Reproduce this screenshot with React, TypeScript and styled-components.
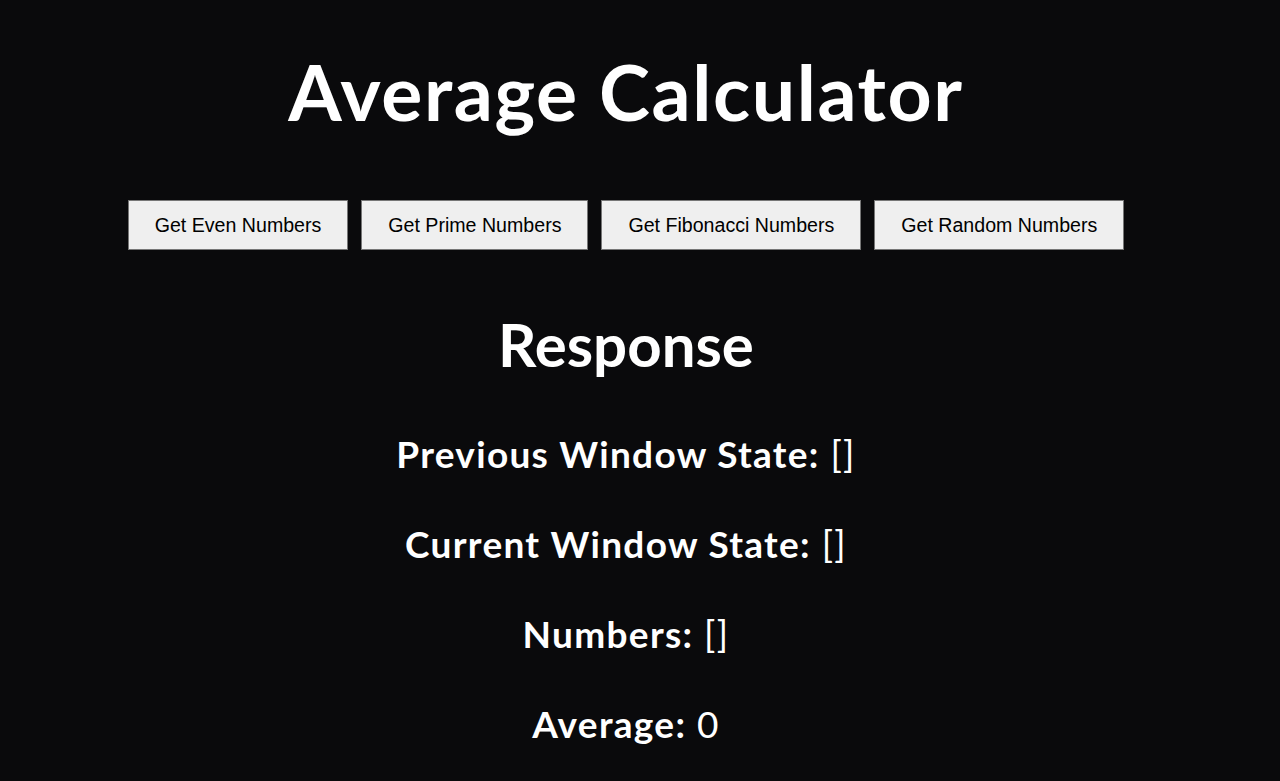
import React from "react";
import styled, { createGlobalStyle } from "styled-components";

const GlobalStyle = createGlobalStyle`
  html, body {
    margin: 0;
    padding: 0;
    background: #0a0a0c;
  }
  body {
    font-family: Lato, "Open Sans", sans-serif;
    color: #ffffff;
  }
`;

const Page = styled.main`
  box-sizing: border-box;
  width: 100%;
  min-height: 781px;
  padding: 46px 28px 0 0;
  display: flex;
  flex-direction: column;
  align-items: center;
  text-align: center;
`;

const Title = styled.h1`
  margin: 0;
  font-family: Lato, sans-serif;
  font-weight: 700;
  font-size: 77px;
  line-height: 90px;
  letter-spacing: 1.6px;
`;

const ButtonRow = styled.div`
  margin-top: 64px;
  display: flex;
  gap: 13px;
  justify-content: center;
`;

const ActionButton = styled.button`
  height: 50px;
  padding: 0 26px;
  background: #efefef;
  color: #000000;
  border: 1px solid #767676;
  border-radius: 0;
  font-family: "Liberation Sans", Arial, sans-serif;
  font-size: 19.6px;
  cursor: pointer;
`;

const SectionTitle = styled.h2`
  margin: 59px 0 0;
  font-family: Lato, sans-serif;
  font-weight: 700;
  font-size: 60px;
  line-height: 70px;
`;

const StatList = styled.div`
  margin-top: 53px;
  display: flex;
  flex-direction: column;
  align-items: center;
  gap: 46px;
`;

const StatLine = styled.p`
  margin: 0;
  font-family: Lato, sans-serif;
  font-size: 37px;
  line-height: 44px;
  font-weight: 400;
  letter-spacing: 1.3px;
`;

const Label = styled.strong`
  font-weight: 700;
`;

const stats = [
  { label: "Previous Window State:", value: "[]" },
  { label: "Current Window State:", value: "[]" },
  { label: "Numbers:", value: "[]" },
  { label: "Average:", value: "0" },
];

const buttons = [
  "Get Even Numbers",
  "Get Prime Numbers",
  "Get Fibonacci Numbers",
  "Get Random Numbers",
];

export default function App() {
  return (
    <>
      <GlobalStyle />
      <Page>
        <Title>Average Calculator</Title>
        <ButtonRow>
          {buttons.map((b) => (
            <ActionButton key={b}>{b}</ActionButton>
          ))}
        </ButtonRow>
        <SectionTitle>Response</SectionTitle>
        <StatList>
          {stats.map((s) => (
            <StatLine key={s.label}>
              <Label>{s.label}</Label> {s.value}
            </StatLine>
          ))}
        </StatList>
      </Page>
    </>
  );
}
